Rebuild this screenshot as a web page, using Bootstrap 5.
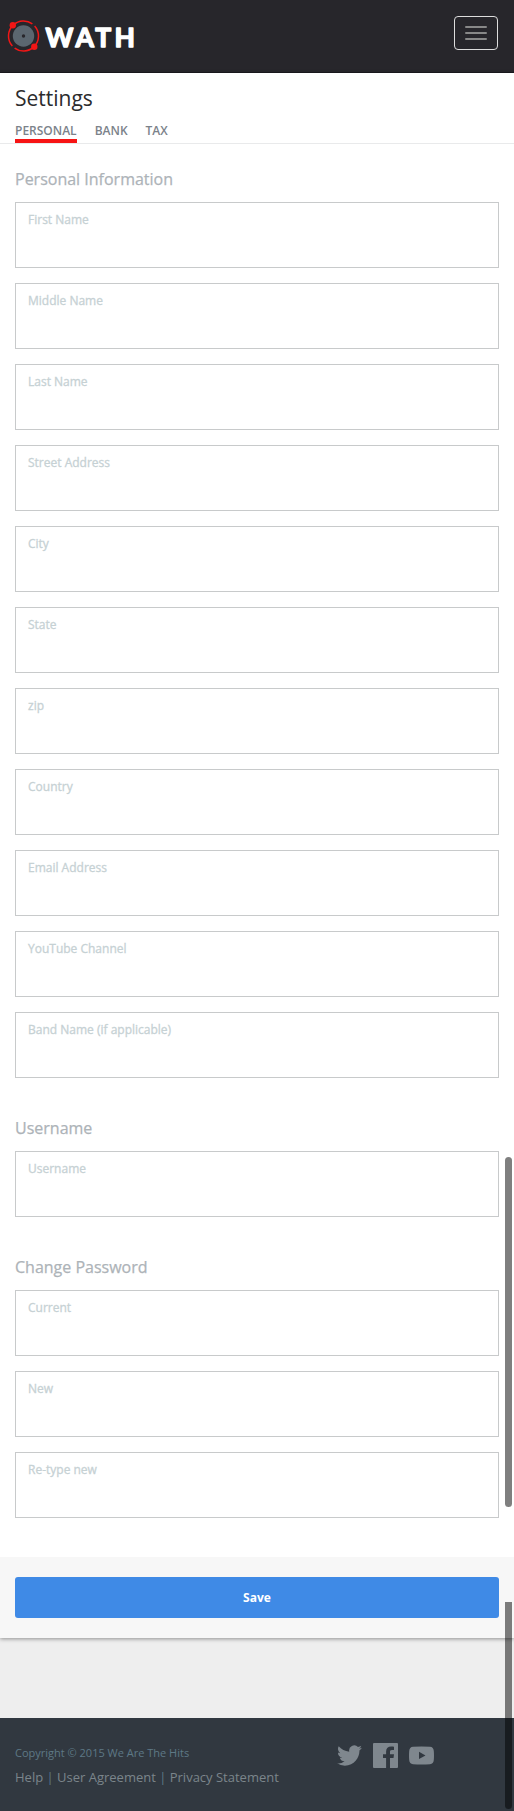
<!DOCTYPE html>
<html lang="en">
<head>
<meta charset="utf-8">
<meta name="viewport" content="width=device-width, initial-scale=1">
<title>Settings</title>
<link href="https://cdn.jsdelivr.net/npm/bootstrap@5.3.0/dist/css/bootstrap.min.css" rel="stylesheet">
<style>
body{font-family:"Open Sans",sans-serif;background:#eee;color:#2b2b2d;overflow-x:hidden}
.topbar{height:73px;background:#27262b;border-bottom:1px solid #1b1a1f}
.menu-btn{width:44px;height:34px;border:1px solid #ddd;border-radius:4px;margin:16px 16px 0 0;padding:0 10px;background:none;gap:4px}
.menu-btn span{height:2px;border-radius:1px;background:#888}
.panel{background:#fff;box-shadow:0 1px 4px rgba(0,0,0,.4)}
.title,.tabs,.form-area,.foot{padding-left:15px;padding-right:15px}
.title{font-size:21px;line-height:30px;padding-top:10px;height:41px;font-weight:400}
.tabs{height:30px;border-bottom:1px solid #e9eaeb;gap:18px}
.tabs a{font-size:12px;font-weight:600;line-height:16px;height:29px;padding-top:9px;color:#7b828a;text-decoration:none}
.tabs a.active{border-bottom:4px solid #f71414}
.group-title{font-size:16px;font-weight:400;line-height:22px;color:#adb3b8;-webkit-text-stroke:.25px #adb3b8;padding-top:24px;height:58px}
.field{display:block;height:66px;border:1px solid #c8cacb;margin-bottom:15px;padding:9px 12px;font-size:12px;line-height:16px;color:#c6d1d4;-webkit-text-stroke:.3px #c6d1d4}
.save-bar{background:#f7f7f7;padding:20px 15px;height:81px;margin-top:39px}
.btn-save,.btn-save:hover{height:41px;border-radius:3px;background:#3f8ae6;color:#fff;font-size:12px;font-weight:700;padding:0}
.foot{margin-top:80px;height:93px;background:#313840;color:#5e7986}
.copy{font-size:11px;line-height:16px;padding-top:27px}
.links{font-size:13px;line-height:18px;margin-top:7px}
.links a{color:#7b858b;text-decoration:none}
.social{left:337px;top:25px;gap:11px;color:#7f878e}
.bar{right:2px;width:7px;background:rgba(0,0,0,.5);border-radius:4px}
.bar-a{top:1157px;height:350px}
.bar-b{top:1602px;height:207px;border-radius:0 0 4px 4px}
</style>
</head>
<body class="position-relative">
<nav class="topbar d-flex justify-content-between align-items-start">
  <svg width="145" height="72" viewBox="0 0 145 72" role="img" aria-label="WATH">
    <circle cx="23.500" cy="36" r="15" fill="none" stroke="#f21616" stroke-width="1.500" pathLength="360" stroke-dasharray="168 12" transform="rotate(-42 23.500 36)"/>
    <circle cx="23.500" cy="36" r="10.700" fill="#5b666f"/><circle cx="23.500" cy="36" r="1.700" fill="#27262b"/>
    <circle cx="12.800" cy="25.300" r="3.200" fill="#f21616"/><circle cx="34.300" cy="46.800" r="3.200" fill="#f21616"/>
    <text x="45.500" y="46.500" textLength="89.500" font-family="Lato" font-weight="700" font-size="26.500" fill="#fff" stroke="#fff" stroke-width="1.400" stroke-linejoin="round">WATH</text>
  </svg>
  <button class="menu-btn d-flex flex-column justify-content-center" aria-label="Menu"><span></span><span></span><span></span></button>
</nav>
<main class="panel">
  <h1 class="title mb-0">Settings</h1>
  <div class="tabs d-flex"><a class="active" href="#">PERSONAL</a><a href="#">BANK</a><a href="#">TAX</a></div>
  <form class="form-area">
    <h2 class="group-title mb-0">Personal Information</h2>
    <label class="field">First Name</label>
    <label class="field">Middle Name</label>
    <label class="field">Last Name</label>
    <label class="field">Street Address</label>
    <label class="field">City</label>
    <label class="field">State</label>
    <label class="field">zip</label>
    <label class="field">Country</label>
    <label class="field">Email Address</label>
    <label class="field">YouTube Channel</label>
    <label class="field">Band Name (if applicable)</label>
    <h2 class="group-title mb-0">Username</h2>
    <label class="field">Username</label>
    <h2 class="group-title mb-0">Change Password</h2>
    <label class="field">Current</label>
    <label class="field">New</label>
    <label class="field">Re-type new</label>
  </form>
  <div class="save-bar"><button class="btn btn-save w-100">Save</button></div>
</main>
<footer class="foot position-relative">
  <div class="copy">Copyright © 2015 We Are The Hits</div>
  <div class="links"><a href="#">Help</a> | <a href="#">User Agreement</a> | <a href="#">Privacy Statement</a></div>
  <div class="social position-absolute d-flex">
    <svg width="25" height="25" viewBox="0 0 24 24" fill="currentColor"><path d="M23.950 4.570a10 10 0 0 1-2.820.770 4.960 4.960 0 0 0 2.160-2.720c-.950.550-2 .950-3.130 1.180a4.920 4.920 0 0 0-8.380 4.480C7.690 8.090 4.070 6.130 1.640 3.160a4.920 4.920 0 0 0 1.520 6.570 4.900 4.900 0 0 1-2.230-.610v.060a4.920 4.920 0 0 0 3.950 4.830 5 5 0 0 1-2.210.080 4.940 4.940 0 0 0 4.600 3.420A9.870 9.870 0 0 1 0 19.540a13.990 13.990 0 0 0 7.550 2.210c9.050 0 14-7.500 14-13.980 0-.210 0-.420-.020-.630a9.940 9.940 0 0 0 2.420-2.570z"/></svg>
    <svg width="25" height="25" viewBox="0 0 25 25" fill="currentColor"><path d="M1 0h23a1 1 0 0 1 1 1v23a1 1 0 0 1-1 1h-7v-10h3.500l.5-3.800H17V9c0-1.200.4-1.900 2-1.900h2V3.700c-.4-.1-1.500-.2-2.900-.2-3 0-5 1.800-5 5v2.700H10V15h3.100v10H1a1 1 0 0 1-1-1V1a1 1 0 0 1 1-1z"/></svg>
    <svg width="25" height="25" viewBox="0 0 25 25" fill="currentColor"><path fill-rule="evenodd" d="M4 3.800Q12.500 3 21 3.800 24.500 4 24.800 8q.4 4.500 0 9-.3 4-3.800 4.200-8.500.7-17 0Q.5 21 .2 17q-.4-4.500 0-9Q.5 4 4 3.800zM10 8.700v7.400l6.500-3.700z"/></svg>
  </div>
</footer>
<div class="bar bar-a position-absolute"></div>
<div class="bar bar-b position-absolute"></div>
<script src="https://cdn.jsdelivr.net/npm/bootstrap@5.3.0/dist/js/bootstrap.bundle.min.js"></script>
</body>
</html>
